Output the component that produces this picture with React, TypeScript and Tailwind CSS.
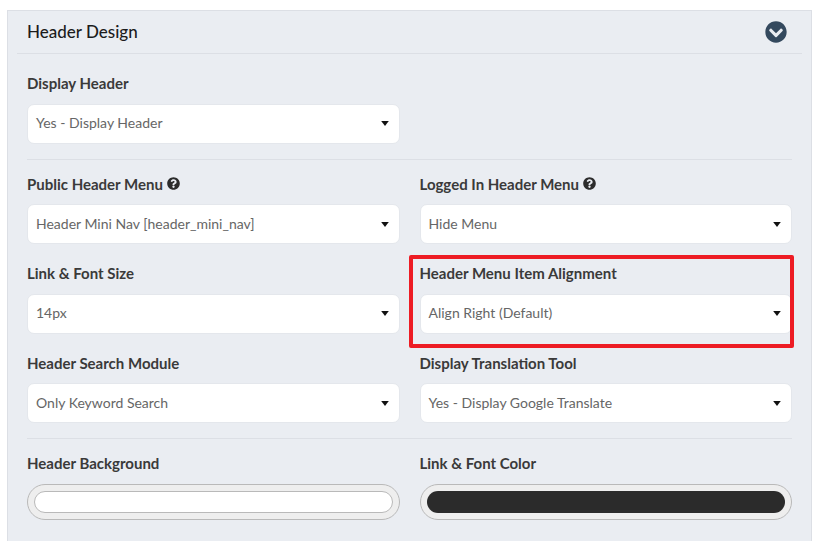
import { FaChevronCircleDown, FaQuestionCircle } from 'react-icons/fa'

function Label({ text, help }: { text: string; help?: boolean }) {
  return (
    <div className="flex h-[20px] items-center gap-[4px] text-[15px] leading-[20px] font-bold text-[#3a3a3a]">
      {text}
      {help && <FaQuestionCircle className="h-[13px] w-[13px] text-[#2c2c2c]" />}
    </div>
  )
}

function Select({ value }: { value: string }) {
  return (
    <div className="mt-[10.5px] flex h-[40px] items-center justify-between rounded-[7px] border border-[#e4e7ec] bg-white pr-[10px] pl-[8px] text-[14px] text-[#666666]">
      <span className="mb-[2px]">{value}</span>
      <svg width="8" height="5" viewBox="0 0 8 5">
        <path d="M0.2 0h7.6L4 5z" fill="#111111" />
      </svg>
    </div>
  )
}

function Field({ label, value, help }: { label: string; value: string; help?: boolean }) {
  return (
    <div>
      <Label text={label} help={help} />
      <Select value={value} />
    </div>
  )
}

function Swatch({ label, color }: { label: string; color: string }) {
  return (
    <div>
      <Label text={label} />
      <div className="mt-[10.5px] h-[36px] rounded-full border border-[#b9b9b9] bg-[#eeeeee] p-[6px]">
        <div className={`h-[22px] rounded-full ${color}`} />
      </div>
    </div>
  )
}

export default function App() {
  return (
    <div className="relative h-[541px] w-[819px] overflow-hidden bg-white pt-[10px] pl-[7px] font-['Lato',sans-serif]">
      <div className="h-[560px] w-[805px] border border-[#dcdfe5] bg-[#eaedf2]">
        {/* Panel header */}
        <div className="mx-[9px] flex h-[43px] items-center justify-between border-b border-[#dcdfe5] pr-[15px] pl-[10px]">
          <h2 className="text-[17px] font-medium text-[#1c1c1c]">Header Design</h2>
          <FaChevronCircleDown className="h-[22px] w-[22px] text-[#34495e]" />
        </div>

        <div className="px-[19px] pt-[19px]">
          <div className="grid grid-cols-2 gap-x-5">
            <Field label="Display Header" value="Yes - Display Header" />
          </div>
          <div className="mt-[15px] mb-[14.25px] border-t border-[#dcdfe5]" />

          <div className="grid grid-cols-2 gap-x-5 gap-y-[19px]">
            <Field label="Public Header Menu" value="Header Mini Nav [header_mini_nav]" help />
            <Field label="Logged In Header Menu" value="Hide Menu" help />
            <Field label="Link & Font Size" value="14px" />
            <Field label="Header Menu Item Alignment" value="Align Right (Default)" />
            <Field label="Header Search Module" value="Only Keyword Search" />
            <Field label="Display Translation Tool" value="Yes - Display Google Translate" />
          </div>
          <div className="mt-[15px] mb-[14px] border-t border-[#dcdfe5]" />

          <div className="grid grid-cols-2 gap-x-5">
            <Swatch label="Header Background" color="border border-[#b9b9b9] bg-white" />
            <Swatch label="Link & Font Color" color="bg-[#2b2b2b]" />
          </div>
        </div>
      </div>

      {/* Red highlight annotation */}
      <div className="absolute top-[255px] left-[409px] h-[93px] w-[385px] rounded-[2px] border-4 border-[#ed1c24]" />
    </div>
  )
}
